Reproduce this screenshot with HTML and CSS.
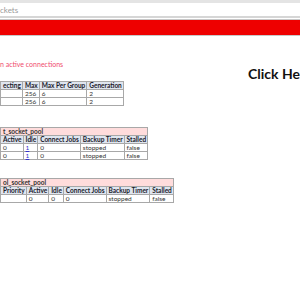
FILE: index.html
```html
<!DOCTYPE html>
<html lang="en">

<head>
    <meta charset="UTF-8">
    <meta name="viewport" content="width=device-width, initial-scale=1.0">
    <title>Sockets</title>
    <link rel="stylesheet" href="styles.css">
</head>

<body>
    <div class="tab-bar">
        <span class="tab-title">ckets</span>
    </div>
    <div class="status-bar"></div>

    <div class="content">
        <div class="top-row">
            <div class="summary">
                <p class="warning">n active connections</p>
                <table class="grid">
                    <tr>
                        <th>ecting</th>
                        <th>Max</th>
                        <th>Max Per Group</th>
                        <th>Generation</th>
                    </tr>
                    <tr>
                        <td></td>
                        <td>256</td>
                        <td>6</td>
                        <td>2</td>
                    </tr>
                    <tr>
                        <td></td>
                        <td>256</td>
                        <td>6</td>
                        <td>2</td>
                    </tr>
                </table>
            </div>
            <h2 class="click-here">Click He</h2>
        </div>

        <table class="grid pool pool-one">
            <tr>
                <td class="pool-name" colspan="5">t_socket_pool</td>
            </tr>
            <tr>
                <th>Active</th>
                <th>Idle</th>
                <th>Connect Jobs</th>
                <th>Backup Timer</th>
                <th>Stalled</th>
            </tr>
            <tr>
                <td>0</td>
                <td><a href="#">1</a></td>
                <td>0</td>
                <td>stopped</td>
                <td>false</td>
            </tr>
            <tr>
                <td>0</td>
                <td><a href="#">1</a></td>
                <td>0</td>
                <td>stopped</td>
                <td>false</td>
            </tr>
        </table>

        <table class="grid pool pool-two">
            <tr>
                <td class="pool-name" colspan="6">ol_socket_pool</td>
            </tr>
            <tr>
                <th>Priority</th>
                <th>Active</th>
                <th>Idle</th>
                <th>Connect Jobs</th>
                <th>Backup Timer</th>
                <th>Stalled</th>
            </tr>
            <tr>
                <td></td>
                <td>0</td>
                <td>0</td>
                <td>0</td>
                <td>stopped</td>
                <td>false</td>
            </tr>
        </table>
    </div>
</body>

</html>
```

FILE: styles.css
```css
body {
    margin: 0;
    width: 300px;
    height: 300px;
    overflow: hidden;
    background: #ffffff;
    font-family: Lato, "Open Sans", sans-serif;
    font-size: 6.5px;
    color: #222222;
}

.tab-bar {
    height: 13px;
    border-top: 3px solid #e4e4e4;
    border-bottom: 2px solid #d6d6d6;
    display: flex;
    align-items: center;
}

.tab-title {
    color: #9a9a9a;
    font-size: 8px;
}

.status-bar {
    height: 15px;
    margin-top: 1px;
    background: #ee0000;
    border-top: 1px solid #c8c8c8;
    border-bottom: 1px solid #c8c8c8;
}

.content {
    padding-top: 24px;
}

.top-row {
    display: flex;
    align-items: flex-start;
}

.summary {
    width: 248px;
    flex-shrink: 0;
}

.warning {
    margin: 0 0 13px;
    color: #ef4b6e;
    font-size: 7px;
    line-height: 8px;
}

.click-here {
    margin: 5px 0 0;
    font-size: 14px;
    font-weight: bold;
    white-space: nowrap;
    color: #111111;
}

.grid {
    border-collapse: collapse;
    line-height: 7px;
}

.grid th,
.grid td {
    border: 1px solid #a8a8a8;
    padding: 0 1px 0 2px;
    text-align: left;
    white-space: nowrap;
}

.grid th {
    background: #dfe5ef;
    font-weight: bold;
    color: #1a1a2a;
}

.grid td {
    color: #333333;
}

.grid a {
    color: #3333cc;
}

.pool-name {
    background: #ffdcdc;
    font-weight: bold;
}

.pool-one {
    margin-top: 21px;
}

.pool-two {
    margin-top: 18px;
}
```
